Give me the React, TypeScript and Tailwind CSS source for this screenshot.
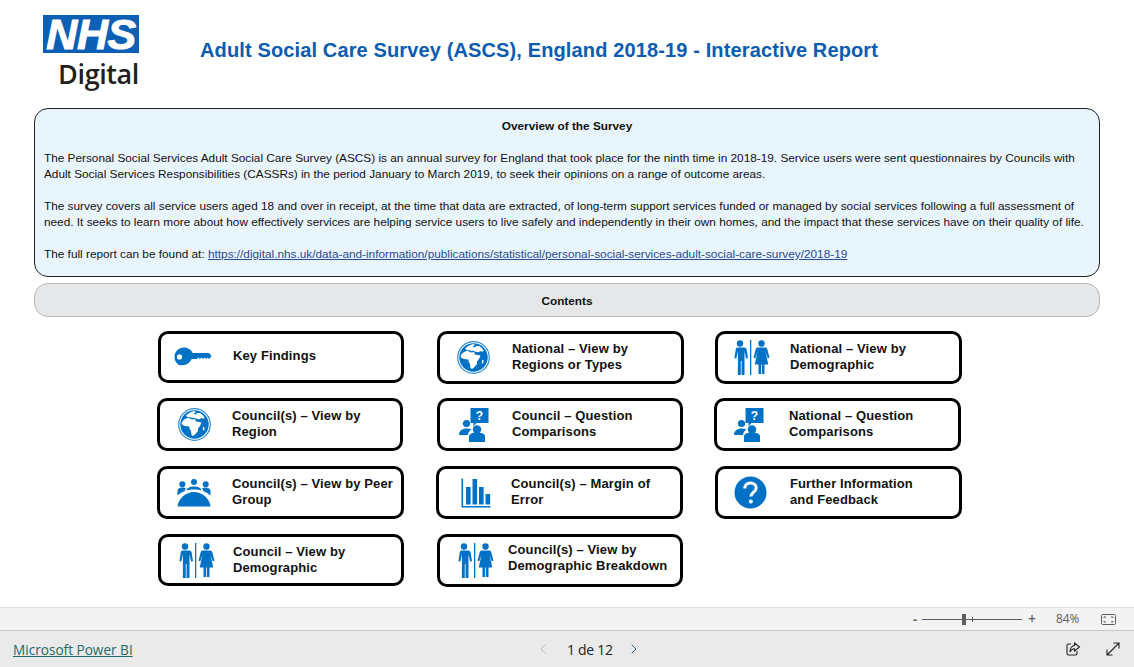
import { ChevronLeft, ChevronRight } from "lucide-react";

const BLUE = "#0072c6";

function KeyIcon() {
  return (
    <svg width="38" height="20" viewBox="0 0 38 20">
      <path
        fill={BLUE}
        fillRule="evenodd"
        d="M10 0.5c4 0 7.200 2.300 8.600 5.500H35l2.600 3-2.400 3-1.600-1.400-1.500 1.400-1.600-1.400-1.500 1.400-1.600-1.400-1.500 1.400-1.600-1.400-1.500 1.400h-5.200c-1.400 3.300-4.600 6-8.600 6C4.600 19.500 0.500 15.200 0.500 10S4.600 0.500 10 0.500zM5.500 7.300a2.600 2.600 0 1 0 0 5.200 2.600 2.600 0 0 0 0-5.200z"
      />
    </svg>
  );
}

function GlobeIcon() {
  return (
    <svg width="33" height="33" viewBox="0 0 33 33">
      <circle cx="16.500" cy="16.500" r="15.800" fill="none" stroke="#2a8ad4" strokeWidth="1.200" />
      <circle cx="16.500" cy="16.500" r="14.200" fill={BLUE} />
      <path
        fill="#fff"
        d="M3.500 15C5 11.500 8 10 11 10l3 1.500 3-.5 1 2.500 3 .5 2.500.5-1.500 3.500-2 2.500v2.500L17.500 26 15 28l-1.500-1-.5-4-1.500-2.500v-2L7 18l-2.500-1z"
      />
      <path
        fill="#fff"
        d="M8 7.500l3.500-2.700 4.500-1.800 2 1-2.500 1.800 2.300.8 1.700-1.800 3.200.4 3 2.800 1 2.500-3.400-.2-2.300 1-2.600-.5-2.400-1-2.300.3-1.200-1-2.500.3zM25 18.500l1.700 1.200-.6 2.800-1.300-.2z"
      />
    </svg>
  );
}

function PeopleIcon() {
  return (
    <svg width="30" height="34" viewBox="0 0 30 34">
      <path fill={BLUE} d="M11.500 0h18v15h-12l-3 3.500V15h-3z" />
      <text
        x="20.500"
        y="12"
        textAnchor="middle"
        fill="#fff"
        fontSize="12"
        fontWeight="700"
        fontFamily="Liberation Sans, sans-serif"
      >
        ?
      </text>
      <circle cx="7.500" cy="15.500" r="3.600" fill={BLUE} />
      <path fill={BLUE} d="M0 27c0-4 3-6.500 7.500-6.500 2 0 3.600.4 4.800 1-2 1.400-3.300 3.300-3.300 5.500z" />
      <circle cx="18" cy="21.500" r="4.200" fill={BLUE} />
      <path fill={BLUE} d="M10 34v-5.500c0-2.500 3.200-4 8-4s8 1.500 8 4V34z" />
    </svg>
  );
}

function DemographicIcon() {
  return (
    <svg width="38" height="35" viewBox="0 0 38 35">
      <circle cx="8" cy="3.500" r="3.200" fill={BLUE} />
      <path
        fill={BLUE}
        d="M4 7.500h8c1.500 0 2.400.8 2.700 2.200l1.300 8.500-1.900.4-1.600-7.400v23.800h-2.900v-14h-.8v14H5.900V11.200l-1.600 7.400-1.900-.4 1.300-8.500c.3-1.400.8-2.200 2.300-2.200z"
      />
      <rect x="18" y="0" width="1.300" height="35" fill={BLUE} />
      <circle cx="29.500" cy="3.500" r="3.200" fill={BLUE} />
      <path
        fill={BLUE}
        d="M26 7.500h7c1.200 0 2 .6 2.300 1.700l2.200 8.500-1.800.5-2.200-6.500 2.800 12.800h-3.800v9.500h-2.600v-9.500h-.8v9.500h-2.600v-9.500h-3.800l2.800-12.800-2.200 6.500-1.800-.5 2.200-8.500c.3-1.100 1.100-1.700 2.300-1.700z"
      />
    </svg>
  );
}

function GroupIcon() {
  return (
    <svg width="34" height="28" viewBox="0 0 34 28">
      <circle cx="5.300" cy="5.300" r="3" fill={BLUE} />
      <circle cx="17" cy="3" r="3" fill={BLUE} />
      <circle cx="28.700" cy="5.300" r="3" fill={BLUE} />
      <path fill={BLUE} d="M0.500 16.500V12c0-2 2-3.400 4.800-3.400 1.800 0 3 .4 3.800 1.100-1 .8-1.400 1.700-1.500 2.600-2.700 1-5 2.400-7.100 4.200z" />
      <path fill={BLUE} d="M33.500 16.500V12c0-2-2-3.400-4.800-3.400-1.800 0-3 .4-3.800 1.100 1 .8 1.400 1.700 1.500 2.600 2.700 1 5 2.400 7.100 4.200z" />
      <path fill={BLUE} d="M9.500 11.500c0-2 3-4 7.500-4s7.500 2 7.500 4c-2.200-.7-4.800-1-7.500-1s-5.300.3-7.500 1z" />
      <path fill={BLUE} d="M0.500 27.500c1-8 8-14.500 16.500-14.500s15.500 6.500 16.500 14.500z" />
    </svg>
  );
}

function ChartIcon() {
  return (
    <svg width="30" height="30" viewBox="0 0 30 30">
      <path fill={BLUE} d="M0.500 0.500h1.600v27.400h27.400v1.600h-29z" />
      <rect x="5" y="9" width="4.600" height="17.500" fill={BLUE} />
      <rect x="11.500" y="1" width="4.600" height="25.500" fill={BLUE} />
      <rect x="18" y="9" width="4.600" height="17.500" fill={BLUE} />
      <rect x="24.500" y="16" width="4.600" height="10.500" fill={BLUE} />
    </svg>
  );
}

function HelpIcon() {
  return (
    <svg width="33" height="33" viewBox="0 0 33 33">
      <circle cx="16.500" cy="16.500" r="16" fill={BLUE} />
      <path
        d="M10.800 12.500c0-3.400 2.500-5.500 5.700-5.500s5.700 2 5.700 5c0 4-5.200 4.300-5.200 8.500"
        fill="none"
        stroke="#fff"
        strokeWidth="3"
      />
      <circle cx="16.900" cy="25.500" r="2" fill="#fff" />
    </svg>
  );
}

function ShareIcon() {
  return (
    <svg width="15" height="14" viewBox="0 0 15 14" fill="none" stroke="#252423" strokeWidth="1.100">
      <path d="M5 2H2.500A1.500 1.500 0 0 0 1 3.500v8A1.500 1.500 0 0 0 2.500 13h7a1.500 1.500 0 0 0 1.500-1.500V9" />
      <path d="M8.500 1l5 4-5 4V6.700C6.300 6.700 5 7.800 4 10c0-3.500 1.500-6 4.500-6.500z" />
    </svg>
  );
}

function ExpandIcon() {
  return (
    <svg width="14" height="14" viewBox="0 0 14 14" fill="none" stroke="#252423" strokeWidth="1.100">
      <path d="M1 13L13 1M7.500 1H13v5.500M1 7.500V13h5.500" />
    </svg>
  );
}

const CARDS = [
  { lines: ["Key Findings"], icon: <KeyIcon />, iconBox: "w-[72px] pl-[13px]", cls: "h-[52px] w-[246px]", text: "pb-[2px]" },
  { lines: ["National – View by", "Regions or Types"], icon: <GlobeIcon />, iconBox: "w-[72px] pl-[17px]", cls: "h-[53px] w-[247px]", text: "pb-px" },
  { lines: ["National – View by", "Demographic"], icon: <DemographicIcon />, iconBox: "w-[72px] pl-[14px]", cls: "h-[53px] w-[247px]", text: "pb-px" },
  { lines: ["Council(s) – View by", "Region"], icon: <GlobeIcon />, iconBox: "w-[72px] pl-[18px]", cls: "h-[53px] w-[246px] -ml-px", text: "pb-px" },
  { lines: ["Council – Question", "Comparisons"], icon: <PeopleIcon />, iconBox: "w-[72px] pl-[19px]", cls: "h-[53px] w-[246px]", text: "pb-px" },
  { lines: ["National – Question", "Comparisons"], icon: <PeopleIcon />, iconBox: "w-[72px] pl-[17px]", cls: "h-[53px] w-[247px] -ml-px", text: "pb-px" },
  { lines: ["Council(s) – View by Peer", "Group"], icon: <GroupIcon />, iconBox: "w-[72px] pl-[17px]", cls: "h-[53px] w-[247px] -ml-px", text: "pb-px" },
  { lines: ["Council(s) – Margin of", "Error"], icon: <ChartIcon />, iconBox: "w-[72px] pl-[22px]", cls: "h-[53px] w-[247px] -ml-px", text: "pb-px" },
  { lines: ["Further Information", "and Feedback"], icon: <HelpIcon />, iconBox: "w-[72px] pl-[16px]", cls: "h-[53px] w-[247px]", text: "pb-px" },
  { lines: ["Council – View by", "Demographic"], icon: <DemographicIcon />, iconBox: "w-[72px] pl-[16px]", cls: "h-[52px] w-[246px]", text: "" },
  { lines: ["Council(s) – View by", "Demographic Breakdown"], icon: <DemographicIcon />, iconBox: "w-[68px] pl-[16px]", cls: "h-[53px] w-[246px]", text: "pb-[5px]" },
];

function Card({ card }: { card: (typeof CARDS)[number] }) {
  return (
    <button
      type="button"
      className={`flex items-center rounded-[10px] border-[3px] border-black bg-white text-left ${card.cls}`}
    >
      <span className={`flex shrink-0 items-center ${card.iconBox}`}>{card.icon}</span>
      <span className={`text-[13px] leading-[16px] font-bold tracking-[0.12px] whitespace-nowrap text-[#111] ${card.text}`}>
        {card.lines.map((line) => (
          <span key={line} className="block">
            {line}
          </span>
        ))}
      </span>
    </button>
  );
}

export default function App() {
  return (
    <div className="flex h-[667px] w-[1134px] flex-col overflow-hidden bg-white font-['Liberation_Sans',Arial,sans-serif]">
      <main className="h-[607px] shrink-0">
        {/* Header */}
        <header className="flex h-[108px] pt-[15px] pl-[43px]">
          <div className="flex w-[96px] flex-col items-end">
            <div className="flex h-[38px] w-[96px] items-center justify-center bg-[#0b5fb5]">
              <span className="text-[43px] leading-[38px] font-bold tracking-[-0.5px] text-white italic [-webkit-text-stroke:1px_white]">
                NHS
              </span>
            </div>
            <span className="mt-[8px] font-['Open_Sans',sans-serif] text-[27px] leading-[26px] font-semibold tracking-[-0.4px] text-[#231f20]">
              Digital
            </span>
          </div>
          <h1 className="mt-[21px] ml-[61px] text-[20px] leading-[28px] font-bold tracking-[0.13px] whitespace-nowrap text-[#0b5cb0]">
            Adult Social Care Survey (ASCS), England 2018-19 - Interactive Report
          </h1>
        </header>

        {/* Overview */}
        <div className="mx-[34px] h-[169px] w-[1066px] rounded-[14px] border border-[#222] bg-[#e9f5fc] px-[9px] pt-[9px] text-[11.8px] leading-[16px] text-[#111]">
          <p className="text-center font-bold">Overview of the Survey</p>
          <p className="mt-[16px] whitespace-nowrap">
            The Personal Social Services Adult Social Care Survey (ASCS) is an annual survey for England that took place for the ninth time in 2018-19. Service users were sent questionnaires by Councils with
            <br />
            Adult Social Services Responsibilities (CASSRs) in the period January to March 2019, to seek their opinions on a range of outcome areas.
          </p>
          <p className="mt-[16px] whitespace-nowrap">
            The survey covers all service users aged 18 and over in receipt, at the time that data are extracted, of long-term support services funded or managed by social services following a full assessment of
            <br />
            need. It seeks to learn more about how effectively services are helping service users to live safely and independently in their own homes, and the impact that these services have on their quality of life.
          </p>
          <p className="mt-[16px] whitespace-nowrap">
            The full report can be found at:{" "}
            <a href="#" className="text-[#2a4a8f] underline">
              https://digital.nhs.uk/data-and-information/publications/statistical/personal-social-services-adult-social-care-survey/2018-19
            </a>
          </p>
        </div>

        {/* Contents */}
        <div className="mx-[34px] mt-[6px] flex h-[34px] w-[1066px] items-center justify-center rounded-[14px] border border-[#b5b7ba] bg-[#e6e7e9] pt-[3px] text-[11.8px] font-bold text-[#111]">
          Contents
        </div>

        {/* Buttons */}
        <div className="mt-[14px] ml-[158px] grid grid-cols-[279px_278px_247px] grid-rows-[52px_53px_53px_52px] gap-y-[15px]">
          {CARDS.map((card) => (
            <Card key={card.lines.join(" ")} card={card} />
          ))}
        </div>
      </main>

      {/* Zoom bar */}
      <div className="flex h-[23px] shrink-0 items-center border-t border-[#e0e0e0] bg-[#f3f3f3] pl-[913px] font-['Open_Sans',sans-serif] text-[#605e5c]">
        <span className="w-[9px] text-[13px] leading-none font-bold">-</span>
        <div className="relative h-px w-[100px] bg-[#605e5c]">
          <span className="absolute top-[-5px] left-[40px] h-[11px] w-[4px] bg-[#605e5c]" />
          <span className="absolute top-[-2px] left-[50px] h-[5px] w-px bg-[#605e5c]" />
        </div>
        <span className="ml-[6px] w-[14px] text-[14px] leading-none font-semibold">+</span>
        <span className="ml-[14px] w-[24px] text-[11.8px] leading-none">84%</span>
        <svg className="ml-[21px]" width="15" height="11" viewBox="0 0 15 11" fill="none" stroke="#605e5c">
          <rect x="0.500" y="0.500" width="14" height="10" rx="1" />
          <path d="M3 4V3h2M12 4V3h-2M3 7v1h2M12 7v1h-2" />
        </svg>
      </div>

      {/* Footer */}
      <footer className="flex h-[37px] shrink-0 items-center border-t border-[#c8c8c8] bg-[#eaeaea] font-['Open_Sans',sans-serif]">
        <a href="#" className="ml-[13px] w-[522px] pt-[3px] text-[13.6px] text-[#1c6b6b] underline">
          Microsoft Power BI
        </a>
        <ChevronLeft className="size-[16px] text-[#b8b8b8]" strokeWidth={1.5} />
        <span className="ml-[16px] w-[52px] text-[14px] tracking-[-0.3px] text-[#252423]">1 de 12</span>
        <ChevronRight className="ml-[7px] size-[16px] text-[#3a5f80]" strokeWidth={1.5} />
        <span className="ml-[424px] flex">
          <ShareIcon />
        </span>
        <span className="ml-[25px] flex">
          <ExpandIcon />
        </span>
      </footer>
    </div>
  );
}
